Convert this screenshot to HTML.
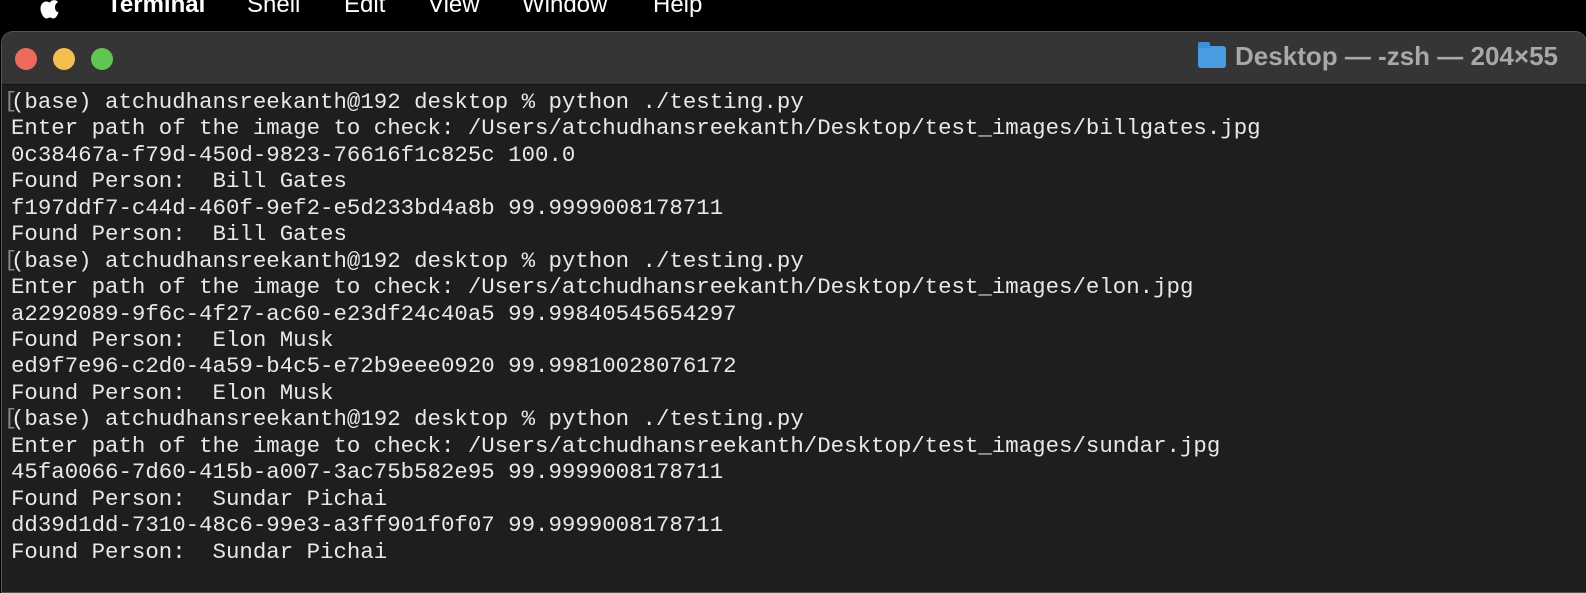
<!DOCTYPE html>
<html><head><meta charset="utf-8"><style>
html,body{margin:0;padding:0;width:1586px;height:574px;overflow:hidden;background:#000;}
.menu{position:absolute;top:0;left:0;width:1586px;height:31px;background:#000;color:#fff;font-family:"Liberation Sans",sans-serif;font-size:24px;}
.menu span{position:absolute;top:-9px;}
.win{position:absolute;left:1px;top:31px;width:1584px;height:560px;background:#1e1e1e;border:1px solid #555;border-radius:12px 12px 0 0;overflow:hidden;}
.tb{height:52px;background:#353535;border-bottom:1px solid #111;position:relative;}
.dot{position:absolute;top:16px;width:22px;height:22px;border-radius:50%;}
.title{position:absolute;right:28px;top:9px;color:#a8a8a8;font-family:"Liberation Sans",sans-serif;font-weight:bold;font-size:26px;white-space:nowrap;}
.folder{display:inline-block;width:28px;height:22px;background:#4a9be0;border-radius:3px;vertical-align:-3px;margin-right:9px;position:relative;}
.folder:before{content:"";position:absolute;left:0;top:-4px;width:12px;height:6px;background:#3d8ed6;border-radius:2px 2px 0 0;}
.t{position:absolute;left:9px;font-family:"Liberation Mono",monospace;font-size:22.4px;line-height:26px;color:#e8e8e8;white-space:pre;}
.br{position:absolute;left:2px;font-family:"Liberation Mono",monospace;font-size:22px;color:#888;}
</style></head><body>
<div class="menu">
<svg style="position:absolute;left:38px;top:-6px" width="26" height="26" viewBox="0 0 26 26"><path d="M17 0c0 3-2 5-4.5 5C12 2 15 0 17 0z" fill="#fff"/><path d="M13 7c2-1 5-1.5 7 1-2 1.5-3 3-3 5.5 0 3 2 4.5 3.5 5-1 3-3 6-5 6-1.5 0-2-1-3.5-1s-2 1-3.5 1c-2.5 0-6-5-6-10 0-4 2.5-7 6-7 1.5 0 3 1 3.5 1z" fill="#fff"/></svg>
<span style="left:107px;font-weight:bold">Terminal</span>
<span style="left:247px">Shell</span>
<span style="left:344px">Edit</span>
<span style="left:428px">View</span>
<span style="left:522px">Window</span>
<span style="left:653px">Help</span>
</div>
<div class="win">
<div class="tb">
<div class="dot" style="left:13px;background:#ec6a5e"></div>
<div class="dot" style="left:51px;background:#f4bf4f"></div>
<div class="dot" style="left:89px;background:#61c554"></div>
<div class="title"><span class="folder"></span>Desktop — -zsh — 204×55</div>
</div>
<div class="t" style="top:57px">(base) atchudhansreekanth@192 desktop % python ./testing.py</div>
<div class="t" style="top:83px">Enter path of the image to check: /Users/atchudhansreekanth/Desktop/test_images/billgates.jpg</div>
<div class="t" style="top:110px">0c38467a-f79d-450d-9823-76616f1c825c 100.0</div>
<div class="t" style="top:136px">Found Person:  Bill Gates</div>
<div class="t" style="top:163px">f197ddf7-c44d-460f-9ef2-e5d233bd4a8b 99.9999008178711</div>
<div class="t" style="top:189px">Found Person:  Bill Gates</div>
<div class="t" style="top:216px">(base) atchudhansreekanth@192 desktop % python ./testing.py</div>
<div class="t" style="top:242px">Enter path of the image to check: /Users/atchudhansreekanth/Desktop/test_images/elon.jpg</div>
<div class="t" style="top:269px">a2292089-9f6c-4f27-ac60-e23df24c40a5 99.99840545654297</div>
<div class="t" style="top:295px">Found Person:  Elon Musk</div>
<div class="t" style="top:321px">ed9f7e96-c2d0-4a59-b4c5-e72b9eee0920 99.99810028076172</div>
<div class="t" style="top:348px">Found Person:  Elon Musk</div>
<div class="t" style="top:374px">(base) atchudhansreekanth@192 desktop % python ./testing.py</div>
<div class="t" style="top:401px">Enter path of the image to check: /Users/atchudhansreekanth/Desktop/test_images/sundar.jpg</div>
<div class="t" style="top:427px">45fa0066-7d60-415b-a007-3ac75b582e95 99.9999008178711</div>
<div class="t" style="top:454px">Found Person:  Sundar Pichai</div>
<div class="t" style="top:480px">dd39d1dd-7310-48c6-99e3-a3ff901f0f07 99.9999008178711</div>
<div class="t" style="top:507px">Found Person:  Sundar Pichai</div>
<div class="br" style="top:57px">[</div>
<div class="br" style="top:216px">[</div>
<div class="br" style="top:374px">[</div>
</div>
</body></html>
